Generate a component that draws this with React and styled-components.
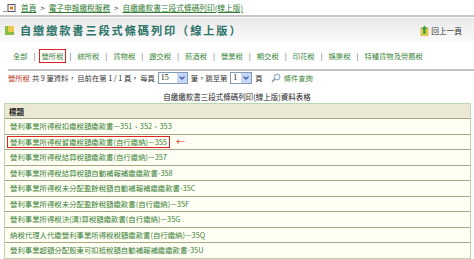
import React from "react";
import styled, { createGlobalStyle } from "styled-components";

const Global = createGlobalStyle`
  html, body { margin: 0; padding: 0; background: #fff; }
  body {
    font-family: "Noto Sans CJK TC", "Noto Sans", sans-serif;
    width: 474px; height: 259px; overflow: hidden;
  }
`;

const Page = styled.div`
  width: 474px;
  display: flex;
  flex-direction: column;
`;

const Breadcrumb = styled.div`
  height: 15px;
  display: flex;
  align-items: center;
  gap: 4px;
  padding-left: 3px;
  font-size: 7.7px;
  color: #2f7a2f;
  border-bottom: 2px solid #c6c6c6;
`;

const Crumb = styled.span`
  color: #2f7a2f;
  text-decoration: underline;
`;

const Sep = styled.span`
  color: #3a3a3a;
`;

const TitleBar = styled.div`
  margin-top: 1px;
  height: 24px;
  display: flex;
  align-items: center;
  padding: 0 12px 0 5px;
  background: linear-gradient(#e9e9e9, #fbfbfb);
`;

const Title = styled.h1`
  margin: 0 0 0 6px;
  font-size: 11.2px;
  font-weight: bold;
  letter-spacing: 1.9px;
  color: #2b7266;
  flex: 1;
  white-space: nowrap;
`;

const Back = styled.span`
  display: flex;
  align-items: center;
  gap: 1px;
  font-size: 7.7px;
  color: #333;
`;

const Tabs = styled.div`
  margin-top: 6px;
  height: 15px;
  display: flex;
  align-items: center;
  padding-left: 10px;
  font-size: 7.3px;
  color: #3b873b;
  white-space: nowrap;
`;

const Tab = styled.span`
  padding: 1px 2px;
  border: 1.5px solid ${(p) => (p.$active ? "#d22" : "transparent")};
`;

const Pipe = styled.span`
  color: #555;
  margin: 0 3px;
`;

const Rule = styled.div`
  margin: 6px 0 0 8px;
  height: 2px;
  background: #c4c4c4;
`;

const Info = styled.div`
  height: 14px;
  display: flex;
  align-items: center;
  padding-left: 8px;
  font-size: 7.3px;
  color: #333;
  white-space: nowrap;
  gap: 2px;
`;

const Red = styled.span`
  color: #c0392b;
`;

const Select = styled.span`
  display: inline-flex;
  align-items: stretch;
  width: ${(p) => p.$w}px;
  height: 12px;
  border: 1px solid #7f9db9;
  background: #fff;
  font-family: "Liberation Serif", serif;
  font-size: 8px;
  color: #222;
  box-sizing: border-box;
  margin: 0 1px;
`;

const SelVal = styled.span`
  flex: 1;
  padding-left: 2px;
  line-height: 10px;
`;

const SelBtn = styled.span`
  width: 10px;
  background: #c7d6f6;
  display: flex;
  align-items: center;
  justify-content: center;
`;

const Query = styled.span`
  display: inline-flex;
  align-items: center;
  gap: 3px;
  margin-left: 6px;
  color: #3b873b;
`;

const Caption = styled.div`
  margin-top: 6px;
  height: 12px;
  text-align: center;
  font-size: 7.5px;
  color: #222;
  line-height: 12px;
`;

const Table = styled.div`
  margin: 0 3px 0 4px;
  border: 1px solid #b8d8b2;
  border-top: none;
  display: flex;
  flex-direction: column;
`;

const HeadRow = styled.div`
  height: 14px;
  display: flex;
  align-items: center;
  padding-left: 4px;
  background: #ebe9d4;
  border-top: 1px solid #b8d8b2;
  border-bottom: 1px solid #a5a888;
  font-size: 7.6px;
  font-weight: bold;
  color: #222;
`;

const Row = styled.div`
  height: 14.5px;
  display: flex;
  align-items: center;
  padding-left: 2px;
  background: #fffff3;
  border-bottom: 1px solid ${(p) => (p.$last ? "#b8d8b2" : "#a5a888")};
  font-size: 7.4px;
  color: #3a7f3a;
  white-space: nowrap;
`;

const RowText = styled.span`
  padding: 0 2px;
  border: 1.5px solid ${(p) => (p.$marked ? "#d22" : "transparent")};
  line-height: 10px;
`;

const Arrow = styled.span`
  color: #d22;
  margin-left: 6px;
  font-size: 9px;
  line-height: 10px;
`;

const HomeIcon = () => (
  <svg width="14" height="10" viewBox="0 0 14 10">
    <rect x="0" y="8" width="4" height="1" fill="#999" />
    <rect x="5" y="1.5" width="7" height="7" fill="#fff" stroke="#555" />
    <rect x="7" y="3.5" width="3" height="3" fill="#e07a20" />
  </svg>
);

const TitleIcon = () => (
  <svg width="9" height="9" viewBox="0 0 9 9">
    <rect x="0" y="0" width="9" height="9" fill="#e8c94a" />
    <rect x="0" y="0" width="3" height="9" fill="#8cbf3f" />
    <rect x="0" y="6" width="9" height="3" fill="#8cbf3f" />
  </svg>
);

const BackIcon = () => (
  <svg width="10" height="11" viewBox="0 0 10 11">
    <rect x="1" y="3" width="7" height="8" fill="#f3d35a" stroke="#b89a2a" strokeWidth="0.6" />
    <path d="M3 9 L3 4 L1.5 4 L4.5 0.5 L7.5 4 L6 4 L6 9 Z" fill="#4aa23c" />
  </svg>
);

const Chevron = () => (
  <svg width="6" height="4" viewBox="0 0 6 4">
    <path d="M0.5 0.5 L3 3 L5.5 0.5" fill="none" stroke="#3b5fa8" strokeWidth="1.3" />
  </svg>
);

const SearchIcon = () => (
  <svg width="10" height="10" viewBox="0 0 10 10">
    <circle cx="6" cy="4" r="3" fill="#eef4fb" stroke="#8aa2bd" strokeWidth="1" />
    <path d="M4 6 L1 9" stroke="#8a8a8a" strokeWidth="1.5" />
  </svg>
);

const tabs = ["全部", "營所稅", "綜所稅", "貨物稅", "證交稅", "菸酒稅", "營業稅", "期交稅", "印花稅", "娛樂稅", "特種貨物及勞務稅"];

const rows = [
  "營利事業所得稅扣繳稅額繳款書—351、352、353",
  "營利事業所得稅暫繳稅額繳款書(自行繳納)—355",
  "營利事業所得稅結算稅額繳款書(自行繳納)—357",
  "營利事業所得稅結算稅額自動補報補繳繳款書-358",
  "營利事業所得稅未分配盈餘稅額自動補報補繳繳款書-35C",
  "營利事業所得稅未分配盈餘稅額繳款書(自行繳納)—35F",
  "營利事業所得稅決(清)算稅額繳款書(自行繳納)—35G",
  "納稅代理人代繳營利事業所得稅稅額繳款書(自行繳納)—35Q",
  "營利事業超額分配股東可扣抵稅額自動補報補繳繳款書-35U",
];

export default function App() {
  return (
    <Page>
      <Global />
      <Breadcrumb>
        <HomeIcon />
        <Crumb>首頁</Crumb>
        <Sep>&gt;</Sep>
        <Crumb>電子申報繳稅服務</Crumb>
        <Sep>&gt;</Sep>
        <Crumb>自繳繳款書三段式條碼列印(線上版)</Crumb>
      </Breadcrumb>
      <TitleBar>
        <TitleIcon />
        <Title>自繳繳款書三段式條碼列印（線上版）</Title>
        <Back>
          <BackIcon />
          回上一頁
        </Back>
      </TitleBar>
      <Tabs>
        {tabs.map((t, i) => (
          <React.Fragment key={t}>
            {i > 0 && <Pipe>|</Pipe>}
            <Tab $active={t === "營所稅"}>{t}</Tab>
          </React.Fragment>
        ))}
      </Tabs>
      <Rule />
      <Info>
        <Red>營所稅</Red>
        <span>共 9 筆資料， 目前在第 1 / 1 頁， 每頁</span>
        <Select $w={30}>
          <SelVal>15</SelVal>
          <SelBtn><Chevron /></SelBtn>
        </Select>
        <span>筆，跳至第</span>
        <Select $w={22}>
          <SelVal>1</SelVal>
          <SelBtn><Chevron /></SelBtn>
        </Select>
        <span>頁</span>
        <Query>
          <SearchIcon />
          條件查詢
        </Query>
      </Info>
      <Caption>自繳繳款書三段式條碼列印(線上版)資料表格</Caption>
      <Table>
        <HeadRow>標題</HeadRow>
        {rows.map((r, i) => (
          <Row key={r} $last={i === rows.length - 1}>
            <RowText $marked={i === 1}>{r}</RowText>
            {i === 1 && <Arrow>←</Arrow>}
          </Row>
        ))}
      </Table>
    </Page>
  );
}
